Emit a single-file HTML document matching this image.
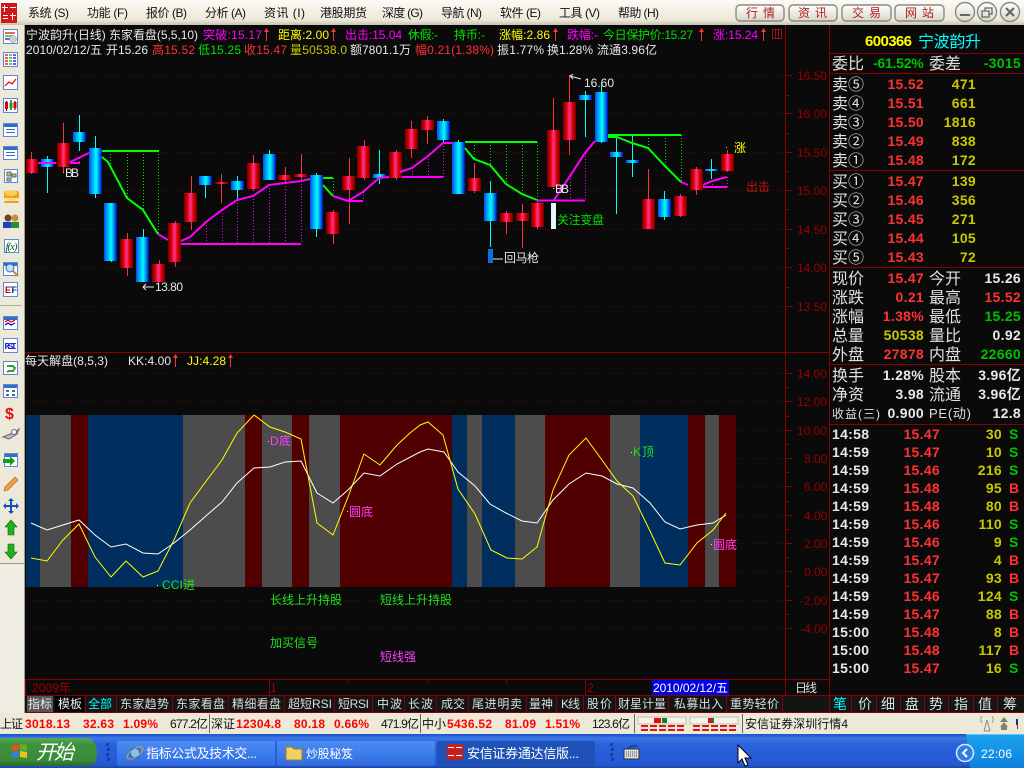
<!DOCTYPE html>
<html lang="zh"><head><meta charset="utf-8"><title>安信证券通达信版</title>
<style>
html,body{margin:0;padding:0;background:#0a0a0a;overflow:hidden;width:1024px;height:768px}
svg{display:block}
text{font-family:"Liberation Sans","WenQuanYi Zen Hei","Noto Sans CJK SC",sans-serif;font-size:12px;white-space:pre}
.w{fill:#e8e8e8}.r{fill:#ff3232}.g{fill:#00e000}.y{fill:#ffff00}.m{fill:#ff00ff}.c{fill:#00ffff}.k{fill:#000}
.yd{fill:#c8c800}.gd{fill:#00c000}.ax{fill:#960000;font-size:12px}
.b{font-weight:bold;font-size:14px;letter-spacing:.3px}.l{font-size:16px;fill:#e0e0e0}
.e{text-anchor:end}.mid{text-anchor:middle}
.t{font-size:14px;fill:#ddd;text-anchor:middle}
.menu{font-size:12px;fill:#111}
.rb{fill:url(#rg)}.bb{fill:url(#bg)}
.ml{fill:none;stroke:#ff00ff;stroke-width:2}.gl{fill:none;stroke:#00ff00;stroke-width:2}
.md{fill:none;stroke:#ff00ff;stroke-dasharray:1 2}.gd2{fill:none;stroke:#00e000;stroke-dasharray:1 2}
.s{font-size:12px;fill:#ff0000;font-weight:bold}.n{font-size:12px;fill:#111}
.tb{font-size:12px;fill:#fff}
</style></head><body>
<svg width="1024" height="768" viewBox="0 0 1024 768" xmlns="http://www.w3.org/2000/svg">
<defs>
<linearGradient id="rg" x1="0" x2="1" y1="0" y2="0"><stop offset="0" stop-color="#700000"/><stop offset=".28" stop-color="#e00000"/><stop offset=".5" stop-color="#ff3399"/><stop offset=".72" stop-color="#e00000"/><stop offset="1" stop-color="#700000"/></linearGradient>
<linearGradient id="bg" x1="0" x2="1" y1="0" y2="0"><stop offset="0" stop-color="#0050f0"/><stop offset=".55" stop-color="#00ffff"/><stop offset=".85" stop-color="#0060e0"/><stop offset="1" stop-color="#0000c0"/></linearGradient>
<linearGradient id="menu" x1="0" x2="0" y1="0" y2="1"><stop offset="0" stop-color="#fbfaf6"/><stop offset=".8" stop-color="#ece9d8"/><stop offset="1" stop-color="#c5c2b2"/></linearGradient>
<linearGradient id="task" x1="0" x2="0" y1="0" y2="1"><stop offset="0" stop-color="#1b4fc4"/><stop offset=".12" stop-color="#3b78e6"/><stop offset=".3" stop-color="#2a63dc"/><stop offset=".9" stop-color="#2459d4"/><stop offset="1" stop-color="#1a45a8"/></linearGradient>
<linearGradient id="start" x1="0" x2="0" y1="0" y2="1"><stop offset="0" stop-color="#5aa85a"/><stop offset=".2" stop-color="#3e933e"/><stop offset=".8" stop-color="#3a8a3a"/><stop offset="1" stop-color="#2a6a2a"/></linearGradient>
<linearGradient id="tray" x1="0" x2="0" y1="0" y2="1"><stop offset="0" stop-color="#1aa3ec"/><stop offset=".5" stop-color="#1593e8"/><stop offset="1" stop-color="#0d7fd8"/></linearGradient>
<linearGradient id="btn" x1="0" x2="0" y1="0" y2="1"><stop offset="0" stop-color="#fff"/><stop offset="1" stop-color="#d8d5c8"/></linearGradient>
<linearGradient id="tk1" x1="0" x2="0" y1="0" y2="1"><stop offset="0" stop-color="#4c8cf5"/><stop offset="1" stop-color="#2f6be0"/></linearGradient>
</defs>

<rect width="1024" height="768" fill="#0a0a0a"/>

<!-- menu bar -->
<rect width="1024" height="25" fill="url(#menu)"/>
<rect x="1" y="3" width="16" height="20" fill="#d01818"/>
<g fill="#fff"><rect x="2" y="7" width="6" height="1"/><rect x="4" y="5" width="1" height="7"/><rect x="10" y="7" width="6" height="1"/><rect x="3" y="15" width="5" height="1"/><rect x="3" y="18" width="5" height="1"/><rect x="10" y="15" width="6" height="1"/><rect x="12" y="13" width="1" height="7"/></g>
<text class="menu" x="28" y="17" textLength="41">系统 (S)</text>
<text class="menu" x="87" y="17" textLength="41">功能 (F)</text>
<text class="menu" x="146" y="17" textLength="41">报价 (B)</text>
<text class="menu" x="205" y="17" textLength="41">分析 (A)</text>
<text class="menu" x="264" y="17" textLength="41">资讯 (I)</text>
<text class="menu" x="320" y="17" textLength="47">港股期货</text>
<text class="menu" x="382" y="17" textLength="41">深度 (G)</text>
<text class="menu" x="441" y="17" textLength="41">导航 (N)</text>
<text class="menu" x="500" y="17" textLength="41">软件 (E)</text>
<text class="menu" x="559" y="17" textLength="41">工具 (V)</text>
<text class="menu" x="618" y="17" textLength="41">帮助 (H)</text>
<g fill="url(#btn)" stroke="#8a8a80" stroke-width="1.4"><rect x="736" y="5" width="48" height="16" rx="4"/><rect x="789" y="5" width="48" height="16" rx="4"/><rect x="842" y="5" width="49" height="16" rx="4"/><rect x="895" y="5" width="49" height="16" rx="4"/></g>
<g>
<text x="746" y="17" fill="#b02020" textLength="29">行 情</text>
<text x="798" y="17" fill="#b02020" textLength="29">资 讯</text>
<text x="852" y="17" fill="#b02020" textLength="29">交 易</text>
<text x="905" y="17" fill="#b02020" textLength="29">网 站</text></g>
<g fill="url(#btn)" stroke="#8a8a80" stroke-width="1.4"><circle cx="965" cy="12" r="9.5"/><circle cx="987" cy="12" r="9.5"/><circle cx="1010" cy="12" r="9.5"/></g>
<rect x="960" y="14" width="10" height="2" fill="#666"/>
<path d="M982 11h7v6h-7zM985 11V8h7v6h-3" fill="none" stroke="#666" stroke-width="1.3"/>
<path d="M1006 8l8 8M1014 8l-8 8" stroke="#666" stroke-width="2.2"/>

<!-- left toolbar -->
<rect x="0" y="25" width="25" height="708" fill="#ece9d8"/>
<rect x="24" y="25" width="1" height="688" fill="#a09e90"/>
<rect x="0" y="565" width="24" height="148" fill="#f0eee2"/>
<rect x="0" y="563" width="24" height="1" fill="#a09e90"/>
<rect x="0" y="305" width="22" height="1" fill="#b0ae9f"/>
<g stroke-width="1">
<g fill="#fff" stroke="#5f86d8"><rect x="3.5" y="29.5" width="14" height="14"/><rect x="3.5" y="52.5" width="14" height="14"/><rect x="3.5" y="75.5" width="14" height="14"/><rect x="3.5" y="98.5" width="14" height="14"/><rect x="3.5" y="123.5" width="14" height="13"/><rect x="3.5" y="146.5" width="14" height="13"/><rect x="4.5" y="169.5" width="13" height="13"/><rect x="4.5" y="239.5" width="14" height="13"/><rect x="3.5" y="262.5" width="14" height="13"/><rect x="3.5" y="282.5" width="14" height="14"/><rect x="3.5" y="316.5" width="14" height="13"/><rect x="3.5" y="338.5" width="14" height="14"/><rect x="3.5" y="361.5" width="14" height="13"/><rect x="3.5" y="384.5" width="14" height="13"/><rect x="4.5" y="453.5" width="13" height="13"/></g>
</g>
<g fill="#2f6fc8"><rect x="4" y="124" width="13" height="3"/><rect x="4" y="147" width="13" height="3"/><rect x="4" y="263" width="13" height="3"/><rect x="4" y="317" width="13" height="3"/><rect x="4" y="385" width="13" height="3"/><rect x="5" y="454" width="12" height="3"/><rect x="6" y="129" width="9" height="1"/><rect x="6" y="132" width="9" height="1"/><rect x="6" y="152" width="9" height="1"/><rect x="6" y="155" width="9" height="1"/></g>
<g fill="none" stroke-width="1.2"><path d="M5 33h10" stroke="#c00"/><path d="M5 36h8" stroke="#0a0"/><path d="M5 39h7" stroke="#00c"/>
<path d="M5 55h3M5 58h3M5 61h3M5 64h3" stroke="#c00"/><path d="M9 55h3M9 58h3M9 61h3M9 64h3" stroke="#0a0"/><path d="M13 55h3M13 58h3M13 61h3M13 64h3" stroke="#00c"/>
<path d="M5 86l4-4 3 2 4-5" stroke="#d00"/><path d="M6.500 101v10M11 100v10M15 101v9" stroke="#222"/>
<path d="M5 322l3-2 3 2 4-2" stroke="#d00"/><path d="M5 325l3-2 3 2 4-2" stroke="#00c"/></g>
<rect x="5" y="102" width="3" height="7" fill="#d00"/><rect x="9.500" y="103" width="3" height="5" fill="#0a0"/><rect x="13.500" y="102" width="3" height="6" fill="#d00"/>
<circle cx="13" cy="39" r="3.500" fill="#ccc" stroke="#888" stroke-width=".5"/>
<path d="M7 172h4v4H7zM7 178h4v3H7zM12 174h4v3h-4z" fill="#f0b030" stroke="#3a6ea5"/>
<rect x="4" y="191" width="15" height="12" fill="#f0a020" rx="2"/><ellipse cx="11" cy="193" rx="6" ry="3" fill="#ffd050"/><rect x="4" y="198" width="15" height="3" fill="#ffe090"/>
<circle cx="8" cy="218" r="3.500" fill="#704020"/><circle cx="15" cy="218" r="3.500" fill="#c09040"/><rect x="3" y="222" width="8" height="6" fill="#2040c0"/><rect x="11" y="222" width="8" height="6" fill="#209040"/>
<text x="5.500" y="250" style="font-size:11px;font-style:italic;font-family:'Liberation Serif',serif" fill="#006030" textLength="12">f(x)</text>
<circle cx="10" cy="268" r="4" fill="#bfe0ff" stroke="#3a6ea5"/><path d="M13 271l5 5" stroke="#c09020" stroke-width="2"/>
<text x="5" y="293" style="font-size:9px;font-weight:bold" fill="#c00000">E</text><text x="10" y="293" style="font-size:9px;font-weight:bold" fill="#2040a0" textLength="7">TF</text>
<text x="4.500" y="349" style="font-size:9px;font-weight:bold;font-family:'Liberation Mono',monospace" fill="#1020d0" textLength="12">RSI</text>
<path d="M7 366h6l2 2-2 3h-5M14 371H9l-2 1" fill="none" stroke="#30a040" stroke-width="2"/>
<path d="M6 390h3v2H6zM12 390h3v2h-3zM6 394h3v2H6zM12 394h3v2h-3z" fill="#3a6ea5"/>
<text x="5" y="419" style="font-size:16px;font-weight:bold" fill="#e01010">$</text>
<path d="M3 437l12-5 4-3-2 5-8 5z" fill="#b8c0d0" stroke="#667"/><circle cx="14" cy="432" r="2.500" fill="#fff" stroke="#667"/>
<path d="M3 459h7v-3l5 5-5 5v-3H3z" fill="#10a020"/>
<path d="M5 487l10-10 3 3-10 10-4 1z" fill="#f0a040" stroke="#a06020" stroke-width=".6"/>
<path d="M11 498l3 3h-2v4h4v-2l3 3-3 3v-2h-4v4h2l-3 3-3-3h2v-4H6v2l-3-3 3-3v2h4v-4H8z" fill="#1050c0"/>
<path d="M11 520l6 7h-3v8H8v-8H5z" fill="#20b020" stroke="#0a6a0a" stroke-width=".6"/>
<path d="M11 559l6-7h-3v-8H8v8H5z" fill="#20b020" stroke="#0a6a0a" stroke-width=".6"/>

<!-- grid -->
<g stroke="#4a0808" stroke-dasharray="1 2" fill="none" shape-rendering="crispEdges">
<path d="M26 75.500H785M26 113.500H785M26 152.500H785M26 190.500H785M26 229.500H785M26 267.500H785M26 306.500H785"/>
<path d="M26 373.500H785M26 401.500H785M26 430.500H785M26 458.500H785M26 486.500H785M26 515.500H785M26 543.500H785M26 571.500H785M26 600.500H785M26 628.500H785"/>
</g>

<!-- top chart: wicks -->
<g fill="none" stroke-width="1" shape-rendering="crispEdges">
<path stroke="#ff3030" d="M31.500 152V174M63.500 123V172M127.500 233V276M159.500 260V282M175.500 221V267M191.500 176V230M221.500 174V203M253.500 155V191M285.500 167V183M301.500 154V180M333.500 210V244M349.500 158V224M364.500 140V180M396.500 150V180M411.500 121V158M427.500 116V144M474.500 163V193M506.500 211V234M522.500 204V248M537.500 201V229M553.500 98V187M569.500 75V155M648.500 169V229M680.500 194V217M696.500 167V195M727.500 150V172"/>
<path stroke="#00ffff" d="M47.500 156V193M79.500 115V151M95.500 136V198M111.500 203V262M143.500 229V282M205.500 176V198M237.500 176V199M269.500 150V180M316.500 173V237M379.500 150V184M443.500 119V143M458.500 140V194M490.500 181V247M585.500 91V137M601.500 83V143M616.500 135V214M632.500 136V177M664.500 191V220M711.500 159V179"/>
</g>
<!-- dotted supports -->
<g shape-rendering="crispEdges">
<path class="gd2" d="M110.500 151V166M127.500 151V198M143.500 151V210M158.500 151V234M333.500 178V196M474.500 142V159M490.500 142V165M506.500 142V184M522.500 142V194M537.500 142V200M632.500 135V143M648.500 135V148M665.500 135V166M681.500 135V182"/>
<path class="md" d="M79.500 158V163M190.500 237V244M206.500 222V244M222.500 210V244M237.500 200V244M253.500 196V244M269.500 185V244M285.500 183V244M301.500 181V244M363.500 192V201M412.500 168V177M428.500 156V177M443.500 143V177M570.500 176V200M585.500 153V200M712.500 181V187M727.500 177V187"/>
</g>
<!-- candles -->
<g>
<rect class="rb" x="26" y="159" width="12" height="14"/><rect class="bb" x="41" y="159" width="13" height="8"/><rect class="rb" x="57" y="143" width="13" height="24"/><rect class="bb" x="73" y="132" width="13" height="10"/><rect class="bb" x="89" y="148" width="13" height="46"/><rect class="bb" x="104" y="203" width="13" height="58"/><rect class="rb" x="120" y="239" width="13" height="29"/><rect class="bb" x="136" y="237" width="13" height="45"/><rect class="rb" x="152" y="264" width="13" height="18"/><rect class="rb" x="168" y="223" width="13" height="39"/><rect class="rb" x="184" y="193" width="13" height="29"/><rect class="bb" x="199" y="176" width="13" height="9"/><rect class="rb" x="215" y="182" width="13" height="2"/><rect class="bb" x="231" y="181" width="13" height="9"/><rect class="rb" x="247" y="163" width="13" height="26"/><rect class="bb" x="263" y="154" width="13" height="26"/><rect class="rb" x="278" y="175" width="13" height="5"/><rect class="rb" x="294" y="174" width="13" height="3"/><rect class="bb" x="310" y="175" width="13" height="54"/><rect class="rb" x="326" y="212" width="13" height="22"/><rect class="rb" x="342" y="176" width="13" height="14"/><rect class="rb" x="357" y="146" width="13" height="32"/><rect class="bb" x="373" y="174" width="13" height="4"/><rect class="rb" x="389" y="152" width="13" height="26"/><rect class="rb" x="405" y="129" width="13" height="20"/><rect class="rb" x="421" y="120" width="13" height="10"/><rect class="bb" x="437" y="121" width="13" height="19"/><rect class="bb" x="452" y="142" width="13" height="52"/><rect class="rb" x="468" y="178" width="13" height="13"/><rect class="bb" x="484" y="193" width="13" height="28"/><rect class="rb" x="500" y="213" width="13" height="9"/><rect class="rb" x="516" y="213" width="13" height="8"/><rect class="rb" x="531" y="203" width="13" height="24"/><rect class="rb" x="547" y="130" width="13" height="57"/><rect class="rb" x="563" y="102" width="13" height="38"/><rect class="bb" x="579" y="95" width="13" height="5"/><rect class="bb" x="595" y="92" width="13" height="50"/><rect class="bb" x="610" y="152" width="13" height="5"/><rect class="bb" x="626" y="160" width="13" height="3"/><rect class="rb" x="642" y="199" width="13" height="30"/><rect class="bb" x="658" y="199" width="13" height="18"/><rect class="rb" x="674" y="196" width="13" height="20"/><rect class="rb" x="690" y="169" width="13" height="21"/><rect class="bb" x="705" y="169" width="13" height="2"/><rect class="rb" x="721" y="154" width="13" height="17"/>
</g>
<!-- indicator lines -->
<path class="gl" d="M102 151H159M323 178H333M465 142H537M608 135H681"/>
<path class="gl" d="M102 157L108 162L127 198L143 210L158 234M323 185L333 196M465 148L474 159L490 165L506 184L522 194L537 200M608 137L617 137L632 143L648 148L665 166L681 182"/>
<path class="ml" d="M38 163H56M70 162L89 153M70 163H80M158 234L168 240M181 241L190 237L206 222L222 210L237 200L253 196L269 185L285 183L301 181L310 179M181 244H301M333 196L348 201L363 192L379 178L389 177M348 201H363M400 172L412 168L428 156L443 143L452 143M402 177H443M537 200.500H585M554 200L570 176L585 153L595 141M681 182L688 185M703 185L712 181L727 177M703 187H727"/>
<rect x="551" y="203" width="5" height="26" fill="#e4f8f8"/><rect x="488" y="249" width="5" height="14" fill="#1070e0"/>
<!-- chart labels -->
<text class="w" x="65" y="177" textLength="14">BB</text><rect x="63" y="172" width="1" height="1" fill="#ff0"/>
<path d="M154 287h-11M146 284l-3 3 3 3" fill="none" stroke="#e8e8e8"/><text class="w" x="155" y="291" textLength="28">13.80</text>
<path d="M581 79l-11-3M573 74l-3 2 3 3" fill="none" stroke="#e8e8e8"/><text class="w" x="584" y="87" textLength="30">16.60</text>
<text class="w" x="555" y="193" textLength="14">BB</text><rect x="553" y="188" width="1" height="1" fill="#ff0"/>
<path d="M493 259h10" stroke="#e8e8e8"/><text class="w" x="504" y="262" textLength="35">回马枪</text>
<text class="g" x="557" y="224" textLength="47">关注变盘</text>
<text class="y" x="734" y="152">涨</text><rect x="726" y="147" width="1" height="1" fill="#ff0"/>
<text x="746" y="191" fill="#d01010" textLength="24">出击</text>

<!-- header -->
<g>
<text class="w" x="26" y="39" textLength="172">宁波韵升(日线) 东家看盘(5,5,10)</text>
<text class="m" x="203" y="39" textLength="59">突破:15.17</text>
<text class="y" x="278" y="39" textLength="51">距离:2.00</text>
<text class="m" x="345" y="39" textLength="57">出击:15.04</text>
<text class="g" x="408" y="39" textLength="30">休假:-</text>
<text class="g" x="454" y="39" textLength="31">持币:-</text>
<text class="y" x="499" y="39" textLength="51">涨幅:2.86</text>
<text class="m" x="567" y="39" textLength="31">跌幅:-</text>
<text class="g" x="603" y="39" textLength="90">今日保护价:15.27</text>
<text class="m" x="713" y="39" textLength="45">涨:15.24</text>
<path d="M266.500 30V41M333.500 30V41M555.500 30V41M701.500 30V41M763.500 30V41M175.500 356V367M230.500 356V367" stroke="#ff3232"/>
<path d="M264 32l2.500-4 2.500 4zM331 32l2.500-4 2.500 4zM553 32l2.500-4 2.500 4zM699 32l2.500-4 2.500 4zM761 32l2.500-4 2.500 4zM173 358l2.500-4 2.500 4zM228 358l2.500-4 2.500 4z" fill="#ff3232"/>
<rect x="772.500" y="29.500" width="9" height="9" fill="none" stroke="#a01010"/><path d="M775.500 30v8M778.500 30v8" stroke="#a01010"/>
<text class="w" x="26" y="54" textLength="76">2010/02/12/五</text>
<text class="w" x="106" y="54" textLength="42">开15.26</text>
<text class="r" x="152" y="54" textLength="43">高15.52</text>
<text class="g" x="198" y="54" textLength="43">低15.25</text>
<text class="r" x="244" y="54" textLength="43">收15.47</text>
<text class="yd" x="290" y="54" textLength="57">量50538.0</text>
<text class="w" x="350" y="54" textLength="61">额7801.1万</text>
<text class="r" x="415" y="54" textLength="79">幅0.21(1.38%)</text>
<text class="w" x="497" y="54" textLength="47">振1.77%</text>
<text class="w" x="547" y="54" textLength="46">换1.28%</text>
<text class="w" x="597" y="54" textLength="60">流通3.96亿</text>
</g>

<!-- sub chart -->
<line x1="25" y1="352.500" x2="829" y2="352.500" stroke="#8a0000"/>
<text class="w" x="25" y="365" textLength="83">每天解盘(8,5,3)</text>
<text class="w" x="128" y="365" textLength="43">KK:4.00</text>
<text class="y" x="187" y="365" textLength="39">JJ:4.28</text>
<g shape-rendering="crispEdges">
<rect x="26" y="415" width="14" height="172" fill="#002e5e"/><rect x="40" y="415" width="31" height="172" fill="#4c4c4c"/><rect x="71" y="415" width="17" height="172" fill="#500000"/><rect x="88" y="415" width="95" height="172" fill="#002e5e"/><rect x="183" y="415" width="62" height="172" fill="#4c4c4c"/><rect x="245" y="415" width="17" height="172" fill="#500000"/><rect x="262" y="415" width="30" height="172" fill="#4c4c4c"/><rect x="292" y="415" width="17" height="172" fill="#500000"/><rect x="309" y="415" width="31" height="172" fill="#4c4c4c"/><rect x="340" y="415" width="112" height="172" fill="#500000"/><rect x="452" y="415" width="15" height="172" fill="#002e5e"/><rect x="467" y="415" width="15" height="172" fill="#4c4c4c"/><rect x="482" y="415" width="33" height="172" fill="#002e5e"/><rect x="515" y="415" width="30" height="172" fill="#4c4c4c"/><rect x="545" y="415" width="65" height="172" fill="#500000"/><rect x="610" y="415" width="30" height="172" fill="#4c4c4c"/><rect x="640" y="415" width="48" height="172" fill="#002e5e"/><rect x="688" y="415" width="17" height="172" fill="#500000"/><rect x="705" y="415" width="14" height="172" fill="#4c4c4c"/><rect x="719" y="415" width="17" height="172" fill="#500000"/>
</g>
<polyline fill="none" stroke="#fff" stroke-width="1" points="31,523 47,530 63,525 79,520 95,535 111,547 126,544 143,553 158,554 174,543 190,530 207,515 222,502 237,483 254,468 270,467 285,462 301,461 317,493 333,503 348,490 364,473 380,476 397,464 420,452 428,449 444,452 458,472 475,486 490,504 506,513 522,521 537,523 553,500 569,484 586,473 602,476 617,484 633,488 650,503 665,522 680,529 697,525 713,523 726,515"/>
<polyline fill="none" stroke="#ffff00" stroke-width="1" points="31,558 47,561 63,540 79,524 95,557 111,577 126,561 143,577 158,571 174,540 190,503 207,480 222,460 237,433 254,415 270,427 285,432 301,439 317,523 333,535 348,497 364,454 380,465 397,445 410,433 420,425 428,422 443,435 458,489 475,514 491,550 507,558 522,559 537,547 553,490 569,455 586,438 602,460 617,481 633,496 650,531 665,563 680,565 697,543 713,530 726,513"/>
<g>
<text x="270" y="445" fill="#ff40ff" textLength="21">D底</text>
<text x="349" y="516" fill="#ff40ff" textLength="24">圆底</text>
<text x="162" y="589" fill="#20e020" textLength="33">CCI进</text>
<text x="270" y="604" fill="#20e020" textLength="72">长线上升持股</text>
<text x="380" y="604" fill="#20e020" textLength="72">短线上升持股</text>
<text x="270" y="647" fill="#20e020" textLength="48">加买信号</text>
<text x="380" y="661" fill="#ff40ff" textLength="36">短线强</text>
<text x="633" y="456" fill="#20e020" textLength="21">K顶</text>
<text x="713" y="549" fill="#ff40ff" textLength="24">圆底</text>
</g>
<g fill="#ff0"><rect x="268" y="441" width="1" height="1"/><rect x="347" y="511" width="1" height="1"/><rect x="157" y="585" width="1" height="1"/><rect x="631" y="452" width="1" height="1"/><rect x="711" y="544" width="1" height="1"/></g>

<!-- axis -->
<g stroke="#8a0000" fill="none" shape-rendering="crispEdges">
<path d="M785.500 25V680M829.500 25V695"/>
<path d="M785 75.500h7M785 113.500h7M785 152.500h7M785 190.500h7M785 229.500h7M785 267.500h7M785 306.500h7M785 373.500h7M785 401.500h7M785 430.500h7M785 458.500h7M785 486.500h7M785 515.500h7M785 543.500h7M785 571.500h7M785 600.500h7M785 628.500h7"/>
<path d="M785 95.500h4M785 133.500h4M785 171.500h4M785 209.500h4M785 248.500h4M785 287.500h4M785 387.500h4M785 416.500h4M785 444.500h4M785 472.500h4M785 501.500h4M785 529.500h4M785 557.500h4M785 586.500h4M785 614.500h4"/>
</g>
<g>
<text class="ax" x="797" y="80">16.50</text><text class="ax" x="797" y="118">16.00</text><text class="ax" x="797" y="157">15.50</text><text class="ax" x="797" y="195">15.00</text><text class="ax" x="797" y="234">14.50</text><text class="ax" x="797" y="272">14.00</text><text class="ax" x="797" y="311">13.50</text>
<text class="ax" x="797" y="378">14.00</text><text class="ax" x="797" y="406">12.00</text><text class="ax" x="797" y="435">10.00</text><text class="ax" x="804" y="463">8.00</text><text class="ax" x="804" y="491">6.00</text><text class="ax" x="804" y="520">4.00</text><text class="ax" x="804" y="548">2.00</text><text class="ax" x="804" y="576">0.00</text><text class="ax" x="800" y="605">-2.00</text><text class="ax" x="800" y="633">-4.00</text>
</g>

<!-- date axis -->
<g stroke="#8a0000" fill="none" shape-rendering="crispEdges">
<path d="M25 679.500H829M25 695.500H1024M25.500 679V713M269.500 679V695M347.500 679V683M427.500 679V683M506.500 679V683M585.500 679V695M665.500 679V683M785.500 679V696"/>
</g>
<text x="32" y="692" fill="#a00000" textLength="39">2009年</text>
<text x="270" y="692" fill="#a00000">1</text>
<text x="587" y="692" fill="#a00000">2</text>
<rect x="652" y="680" width="77" height="15" fill="#0000e0"/>
<text x="653" y="692" fill="#fff" textLength="75">2010/02/12/五</text>
<text x="795" y="692" fill="#ddd" textLength="22">日线</text>

<!-- tabs -->
<rect x="25" y="696" width="1000" height="17" fill="#141414"/>
<rect x="27" y="696" width="26" height="16" fill="#555"/>
<rect x="55" y="696" width="29" height="16" fill="#000"/>
<g stroke="#8a0000" fill="none" shape-rendering="crispEdges">
<path d="M85.500 696V712M116.500 696V712M172.500 696V712M228.500 696V712M284.500 696V712M334.500 696V712M372.500 696V712M404.500 696V712M436.500 696V712M468.500 696V712M526.500 696V712M556.500 696V712M583.500 696V712M615.500 696V712M668.500 696V712M726.500 696V712M782.500 696V712M829.500 696V712M851.500 696V712M876.500 696V712M900.500 696V712M924.500 696V712M948.500 696V712M973.500 696V712M997.500 696V712"/>
<path d="M25 712.500H1024"/>
</g>
<g>
<text x="28" y="708" fill="#eee" textLength="24">指标</text><text x="58" y="708" fill="#eee" textLength="24">模板</text><text x="88" y="708" fill="#00ffff" textLength="24">全部</text>
<text x="120" y="708" fill="#ddd" textLength="49">东家趋势</text><text x="176" y="708" fill="#ddd" textLength="49">东家看盘</text><text x="232" y="708" fill="#ddd" textLength="49">精细看盘</text>
<text x="288" y="708" fill="#ddd" textLength="44">超短RSI</text><text x="338" y="708" fill="#ddd" textLength="31">短RSI</text><text x="377" y="708" fill="#ddd" textLength="25">中波</text>
<text x="408" y="708" fill="#ddd" textLength="25">长波</text><text x="441" y="708" fill="#ddd" textLength="24">成交</text><text x="472" y="708" fill="#ddd" textLength="50">尾进明卖</text>
<text x="529" y="708" fill="#ddd" textLength="24">量神</text><text x="561" y="708" fill="#ddd" textLength="19">K线</text><text x="587" y="708" fill="#ddd" textLength="25">股价</text>
<text x="618" y="708" fill="#ddd" textLength="48">财星计量</text><text x="674" y="708" fill="#ddd" textLength="49">私募出入</text><text x="730" y="708" fill="#ddd" textLength="49">重势轻价</text>
</g>
<g>
<text class="t" x="840" y="709" style="fill:#00ffff">笔</text><text class="t" x="865" y="709">价</text><text class="t" x="888" y="709">细</text><text class="t" x="912" y="709">盘</text><text class="t" x="936" y="709">势</text><text class="t" x="961" y="709">指</text><text class="t" x="985" y="709">值</text><text class="t" x="1010" y="709">筹</text>
</g>

<!-- right panel -->
<g stroke="#8a0000" fill="none" shape-rendering="crispEdges">
<path d="M829 53.500H1024M829 73.500H1024M829 170.500H1024M829 267.500H1024M829 364.500H1024M829 424.500H1024"/>
</g>
<text class="y" x="865" y="46" style="font-size:15px;font-weight:bold" textLength="47">600366</text>
<text class="c" x="918" y="47" style="font-size:16px" textLength="63">宁波韵升</text>
<text class="l" x="832" y="69">委比</text><text class="gd b" x="873" y="68" textLength="51">-61.52%</text><text class="l" x="929" y="69">委差</text><text class="gd b e" x="1021" y="68">-3015</text>
<g class="rows">
<text class="l" x="832" y="90">卖⑤</text><text class="r b e" x="924" y="89">15.52</text><text class="yd b e" x="976" y="89">471</text>
<text class="l" x="832" y="109">卖④</text><text class="r b e" x="924" y="108">15.51</text><text class="yd b e" x="976" y="108">661</text>
<text class="l" x="832" y="128">卖③</text><text class="r b e" x="924" y="127">15.50</text><text class="yd b e" x="976" y="127">1816</text>
<text class="l" x="832" y="147">卖②</text><text class="r b e" x="924" y="146">15.49</text><text class="yd b e" x="976" y="146">838</text>
<text class="l" x="832" y="166">卖①</text><text class="r b e" x="924" y="165">15.48</text><text class="yd b e" x="976" y="165">172</text>
<text class="l" x="832" y="187">买①</text><text class="r b e" x="924" y="186">15.47</text><text class="yd b e" x="976" y="186">139</text>
<text class="l" x="832" y="206">买②</text><text class="r b e" x="924" y="205">15.46</text><text class="yd b e" x="976" y="205">356</text>
<text class="l" x="832" y="225">买③</text><text class="r b e" x="924" y="224">15.45</text><text class="yd b e" x="976" y="224">271</text>
<text class="l" x="832" y="244">买④</text><text class="r b e" x="924" y="243">15.44</text><text class="yd b e" x="976" y="243">105</text>
<text class="l" x="832" y="263">买⑤</text><text class="r b e" x="924" y="262">15.43</text><text class="yd b e" x="976" y="262">72</text>
<text class="l" x="832" y="284">现价</text><text class="r b e" x="924" y="283">15.47</text><text class="l" x="929" y="284">今开</text><text class="w b e" x="1021" y="283">15.26</text>
<text class="l" x="832" y="303">涨跌</text><text class="r b e" x="924" y="302">0.21</text><text class="l" x="929" y="303">最高</text><text class="r b e" x="1021" y="302">15.52</text>
<text class="l" x="832" y="322">涨幅</text><text class="r b e" x="924" y="321">1.38%</text><text class="l" x="929" y="322">最低</text><text class="gd b e" x="1021" y="321">15.25</text>
<text class="l" x="832" y="341">总量</text><text class="yd b e" x="924" y="340">50538</text><text class="l" x="929" y="341">量比</text><text class="w b e" x="1021" y="340">0.92</text>
<text class="l" x="832" y="360">外盘</text><text class="r b e" x="924" y="359">27878</text><text class="l" x="929" y="360">内盘</text><text class="gd b e" x="1021" y="359">22660</text>
<text class="l" x="832" y="381">换手</text><text class="w b e" x="924" y="380">1.28%</text><text class="l" x="929" y="381">股本</text><text class="w b e" x="1021" y="380">3.96亿</text>
<text class="l" x="832" y="400">净资</text><text class="w b e" x="924" y="399">3.98</text><text class="l" x="929" y="400">流通</text><text class="w b e" x="1021" y="399">3.96亿</text>
<text x="832" y="418" fill="#e0e0e0" textLength="48">收益(三)</text><text class="w b e" x="924" y="418">0.900</text><text x="929" y="418" fill="#e0e0e0" style="font-size:13px" textLength="42">PE(动)</text><text class="w b e" x="1021" y="418">12.8</text>
</g>
<g>
<text class="w b" x="832" y="439">14:58</text><text class="r b e" x="940" y="439">15.47</text><text class="yd b e" x="1002" y="439">30</text><text class="gd b" x="1009" y="439">S</text>
<text class="w b" x="832" y="457">14:59</text><text class="r b e" x="940" y="457">15.47</text><text class="yd b e" x="1002" y="457">10</text><text class="gd b" x="1009" y="457">S</text>
<text class="w b" x="832" y="475">14:59</text><text class="r b e" x="940" y="475">15.46</text><text class="yd b e" x="1002" y="475">216</text><text class="gd b" x="1009" y="475">S</text>
<text class="w b" x="832" y="493">14:59</text><text class="r b e" x="940" y="493">15.48</text><text class="yd b e" x="1002" y="493">95</text><text class="r b" x="1009" y="493">B</text>
<text class="w b" x="832" y="511">14:59</text><text class="r b e" x="940" y="511">15.48</text><text class="yd b e" x="1002" y="511">80</text><text class="r b" x="1009" y="511">B</text>
<text class="w b" x="832" y="529">14:59</text><text class="r b e" x="940" y="529">15.46</text><text class="yd b e" x="1002" y="529">110</text><text class="gd b" x="1009" y="529">S</text>
<text class="w b" x="832" y="547">14:59</text><text class="r b e" x="940" y="547">15.46</text><text class="yd b e" x="1002" y="547">9</text><text class="gd b" x="1009" y="547">S</text>
<text class="w b" x="832" y="565">14:59</text><text class="r b e" x="940" y="565">15.47</text><text class="yd b e" x="1002" y="565">4</text><text class="r b" x="1009" y="565">B</text>
<text class="w b" x="832" y="583">14:59</text><text class="r b e" x="940" y="583">15.47</text><text class="yd b e" x="1002" y="583">93</text><text class="r b" x="1009" y="583">B</text>
<text class="w b" x="832" y="601">14:59</text><text class="r b e" x="940" y="601">15.46</text><text class="yd b e" x="1002" y="601">124</text><text class="gd b" x="1009" y="601">S</text>
<text class="w b" x="832" y="619">14:59</text><text class="r b e" x="940" y="619">15.47</text><text class="yd b e" x="1002" y="619">88</text><text class="r b" x="1009" y="619">B</text>
<text class="w b" x="832" y="637">15:00</text><text class="r b e" x="940" y="637">15.48</text><text class="yd b e" x="1002" y="637">8</text><text class="r b" x="1009" y="637">B</text>
<text class="w b" x="832" y="655">15:00</text><text class="r b e" x="940" y="655">15.48</text><text class="yd b e" x="1002" y="655">117</text><text class="r b" x="1009" y="655">B</text>
<text class="w b" x="832" y="673">15:00</text><text class="r b e" x="940" y="673">15.47</text><text class="yd b e" x="1002" y="673">16</text><text class="gd b" x="1009" y="673">S</text>
</g>

<!-- status bar -->
<rect x="0" y="713" width="1024" height="21" fill="#ece9d8"/>
<g>
<text class="n" x="0" y="728" textLength="23">上证</text><text class="s" x="25" y="728" textLength="45">3018.13</text><text class="s" x="83" y="728" textLength="31">32.63</text><text class="s" x="123" y="728" textLength="35">1.09%</text><text class="n" x="170" y="728" textLength="38">677.2亿</text>
<text class="n" x="211" y="728" textLength="24">深证</text><text class="s" x="236" y="728" textLength="45">12304.8</text><text class="s" x="294" y="728" textLength="31">80.18</text><text class="s" x="334" y="728" textLength="35">0.66%</text><text class="n" x="381" y="728" textLength="38">471.9亿</text>
<text class="n" x="422" y="728" textLength="24">中小</text><text class="s" x="447" y="728" textLength="45">5436.52</text><text class="s" x="505" y="728" textLength="31">81.09</text><text class="s" x="545" y="728" textLength="35">1.51%</text><text class="n" x="592" y="728" textLength="38">123.6亿</text>
<text class="n" x="745" y="728" textLength="103">安信证券深圳行情4</text>
</g>
<g fill="#666" shape-rendering="crispEdges"><rect x="209" y="714" width="1" height="19"/><rect x="420" y="714" width="1" height="19"/><rect x="634" y="714" width="1" height="19"/><rect x="742" y="714" width="1" height="19"/></g>
<rect x="638" y="717" width="48" height="7" fill="#f4f2ea" stroke="#c4c2b2"/><rect x="690" y="717" width="48" height="7" fill="#f4f2ea" stroke="#c4c2b2"/>
<rect x="654" y="718" width="7" height="5" fill="#e01010"/><rect x="662" y="718" width="5" height="5" fill="#108030"/><rect x="708" y="718" width="4" height="5" fill="#e01010"/><rect x="712" y="718" width="2" height="5" fill="#108030"/>
<g fill="#e81010"><rect x="641" y="725" width="7" height="2"/><rect x="650" y="725" width="7" height="2"/><rect x="659" y="725" width="7" height="2"/><rect x="668" y="725" width="7" height="2"/><rect x="677" y="725" width="7" height="2"/><rect x="693" y="725" width="7" height="2"/><rect x="702" y="725" width="7" height="2"/><rect x="711" y="725" width="7" height="2"/><rect x="720" y="725" width="7" height="2"/><rect x="729" y="725" width="7" height="2"/>
<rect x="641" y="729" width="7" height="2"/><rect x="650" y="729" width="7" height="2"/><rect x="659" y="729" width="7" height="2"/><rect x="668" y="729" width="7" height="2"/><rect x="677" y="729" width="7" height="2"/><rect x="693" y="729" width="7" height="2"/><rect x="702" y="729" width="7" height="2"/><rect x="711" y="729" width="7" height="2"/><rect x="720" y="729" width="7" height="2"/><rect x="729" y="729" width="7" height="2"/></g>
<path d="M987 720l-3 11M987 720l3 11M984 731h6" fill="none" stroke="#888"/><path d="M982 716a6 6 0 0 0 0 7M992 716a6 6 0 0 1 0 7" fill="none" stroke="#9a9a50"/>
<path d="M1004 717l4 5h-8zM1004 722l4 5h-8zM1001 727h6v3h-6z" fill="#808070"/>
<rect x="1016" y="719" width="2" height="6" fill="#1030a0"/><rect x="1017" y="725" width="1" height="4" fill="#d01010"/>

<!-- taskbar -->
<rect x="0" y="734" width="1024" height="34" fill="url(#task)"/>
<path d="M0 738h86q10 0 11 14 0 14-9 14H0z" fill="url(#start)"/>
<g shape-rendering="crispEdges"><path d="M12 745l7-1v6l-7 1z" fill="#e05020"/><path d="M20 744l7 1v6l-7-1z" fill="#60b020"/><path d="M12 752l7-1v6l-7 1z" fill="#3080e0"/><path d="M20 751l7 1v6l-7-1z" fill="#f0c020"/></g>
<text x="36" y="759" fill="#fff" style="font-size:20px;font-style:italic" textLength="38">开始</text>
<g fill="#153fa5"><rect x="106" y="743" width="3" height="3"/><rect x="107" y="748" width="3" height="3"/><rect x="106" y="753" width="3" height="3"/><rect x="107" y="758" width="3" height="3"/><rect x="610" y="743" width="3" height="3"/><rect x="611" y="748" width="3" height="3"/><rect x="610" y="753" width="3" height="3"/><rect x="611" y="758" width="3" height="3"/></g>
<rect x="117" y="741" width="158" height="25" rx="2" fill="url(#tk1)"/>
<rect x="277" y="741" width="158" height="25" rx="2" fill="url(#tk1)"/>
<rect x="437" y="741" width="158" height="25" rx="2" fill="#1e52b7"/>
<circle cx="135" cy="753" r="5" fill="#7fc4ff" stroke="#1c6ad8" stroke-width="1.500"/>
<ellipse cx="135" cy="753" rx="9" ry="4" fill="none" stroke="#e0a020" transform="rotate(-35 135 753)"/>
<text class="tb" x="146" y="758" style="font-size:13px" textLength="111">指标公式及技术交...</text>
<path d="M286 747h6l2 2h8v11h-16z" fill="#f0d060" stroke="#a08020"/>
<text class="tb" x="306" y="758" textLength="47">炒股秘笈</text>
<rect x="447" y="744" width="16" height="16" fill="#c82020"/>
<g fill="#fff"><rect x="448" y="747" width="6" height="1"/><rect x="456" y="747" width="6" height="1"/><rect x="448" y="755" width="6" height="1"/><rect x="456" y="755" width="6" height="1"/></g>
<text class="tb" x="467" y="758" style="font-size:13px" textLength="112">安信证券通达信版...</text>
<rect x="624" y="749" width="15" height="10" rx="1" fill="#ddd" stroke="#333"/>
<path d="M626 752h11M626 754h11M626 756h11" stroke="#555" stroke-dasharray="1 1"/><path d="M627 749l5-3h5" stroke="#222" fill="none"/>
<path d="M738 745v18l4-4 3 7 3-1-3-7h6z" fill="#fff" stroke="#000"/>
<path d="M966 734h58v34h-54z" fill="url(#tray)"/>
<rect x="966" y="734" width="58" height="1" fill="#5cc4ff"/>
<circle cx="965" cy="753" r="8.500" fill="#2f7fe0" stroke="#d8ecff" stroke-width="1.500"/>
<path d="M967 749l-4 4 4 4" fill="none" stroke="#fff" stroke-width="2"/>
<text x="981" y="758" fill="#fff" textLength="31">22:06</text>
</svg>
</body></html>
